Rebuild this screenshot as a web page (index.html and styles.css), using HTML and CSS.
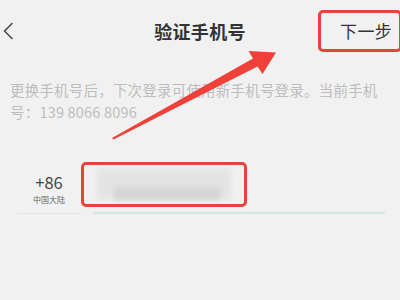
FILE: index.html
```html
<!DOCTYPE html>
<html lang="zh-CN">
<head>
<meta charset="utf-8">
<title>验证手机号</title>
<link rel="stylesheet" href="styles.css">
</head>
<body>
<div class="page">
  <header class="header">
    <div class="back">
      <svg width="12" height="18" viewBox="0 0 12 18"><path d="M10 1.5 L2.5 9 L10 16.5" fill="none" stroke="#4a4a4a" stroke-width="1.6" stroke-linecap="round" stroke-linejoin="round"/></svg>
    </div>
    <h1 class="title">验证手机号</h1>
    <div class="right">
      <div class="next">下一步</div>
    </div>
  </header>
  <p class="hint">更换手机号后，下次登录可使用新手机号登录。当前手机号：139 8066 8096</p>
  <div class="row">
    <div class="country">
      <div class="code">+86</div>
      <div class="region">中国大陆</div>
    </div>
    <div class="phone">
      <div class="blur-light"></div>
      <div class="blur-dark"></div>
    </div>
  </div>
  <div class="lines">
    <div class="line-left"></div>
    <div class="line-right"></div>
  </div>
  <svg class="arrow" width="400" height="300" viewBox="0 0 400 300">
    <polygon points="112,138 253,58.5 248.5,51 276,52.5 262.5,74 257.5,66.5 113.5,139.5" fill="#f0403a"/>
  </svg>
</div>
</body>
</html>
```
FILE: styles.css
```css
html, body {
  margin: 0;
  padding: 0;
  background: #f1f1f1;
  overflow: hidden;
}
.page {
  position: relative;
  width: 400px;
  height: 300px;
  font-family: "Noto Sans CJK SC", "Noto Sans", sans-serif;
  color: #333;
}
.header {
  display: grid;
  grid-template-columns: 1fr auto 1fr;
  align-items: center;
  height: 61px;
}
.back {
  display: flex;
  align-items: center;
  padding-left: 2px;
  padding-top: 1px;
}
.title {
  margin: 0;
  font-size: 18px;
  font-weight: 600;
  color: #333;
  line-height: 24px;
  letter-spacing: 0.3px;
}
.right {
  display: flex;
  justify-content: flex-end;
  margin-right: -2px;
}
.next {
  box-sizing: border-box;
  width: 84px;
  height: 42px;
  border: 3px solid #e8433b;
  border-radius: 5px;
  display: flex;
  align-items: center;
  justify-content: flex-end;
  padding-right: 7px;
  font-size: 17px;
  color: #333;
  letter-spacing: 0.3px;
}
.hint {
  margin: 18px 14px 0 10px;
  font-size: 14.5px;
  line-height: 22px;
  letter-spacing: 0.2px;
  color: #bdbdbd;
}
.row {
  display: flex;
  align-items: flex-start;
  margin-top: 39px;
  padding-left: 17px;
}
.country {
  width: 64px;
  display: flex;
  flex-direction: column;
  align-items: center;
  margin-top: 10px;
}
.code {
  font-size: 16.5px;
  line-height: 20px;
  color: #444;
}
.region {
  margin-top: 2px;
  font-size: 8px;
  line-height: 11.5px;
  color: #666;
}
.phone {
  position: relative;
  box-sizing: border-box;
  width: 166px;
  height: 45px;
  border: 3px solid #e8433b;
  border-radius: 5px;
  overflow: hidden;
}
.blur-light {
  position: absolute;
  left: 13px;
  top: 4px;
  width: 134px;
  height: 30px;
  background: #e3e3e3;
  filter: blur(3px);
}
.blur-dark {
  position: absolute;
  left: 30px;
  top: 22px;
  width: 106px;
  height: 13px;
  background: #d5d5d5;
  filter: blur(2px);
}
.lines {
  display: flex;
  align-items: center;
  margin-top: 5px;
  height: 2px;
}
.line-left {
  margin-left: 17px;
  width: 65px;
  height: 1px;
  background: #e4e4e4;
}
.line-right {
  margin-left: 11px;
  width: 292px;
  height: 2px;
  background: #d3e6de;
}
.arrow {
  position: absolute;
  left: 0;
  top: 0;
  pointer-events: none;
}
```
